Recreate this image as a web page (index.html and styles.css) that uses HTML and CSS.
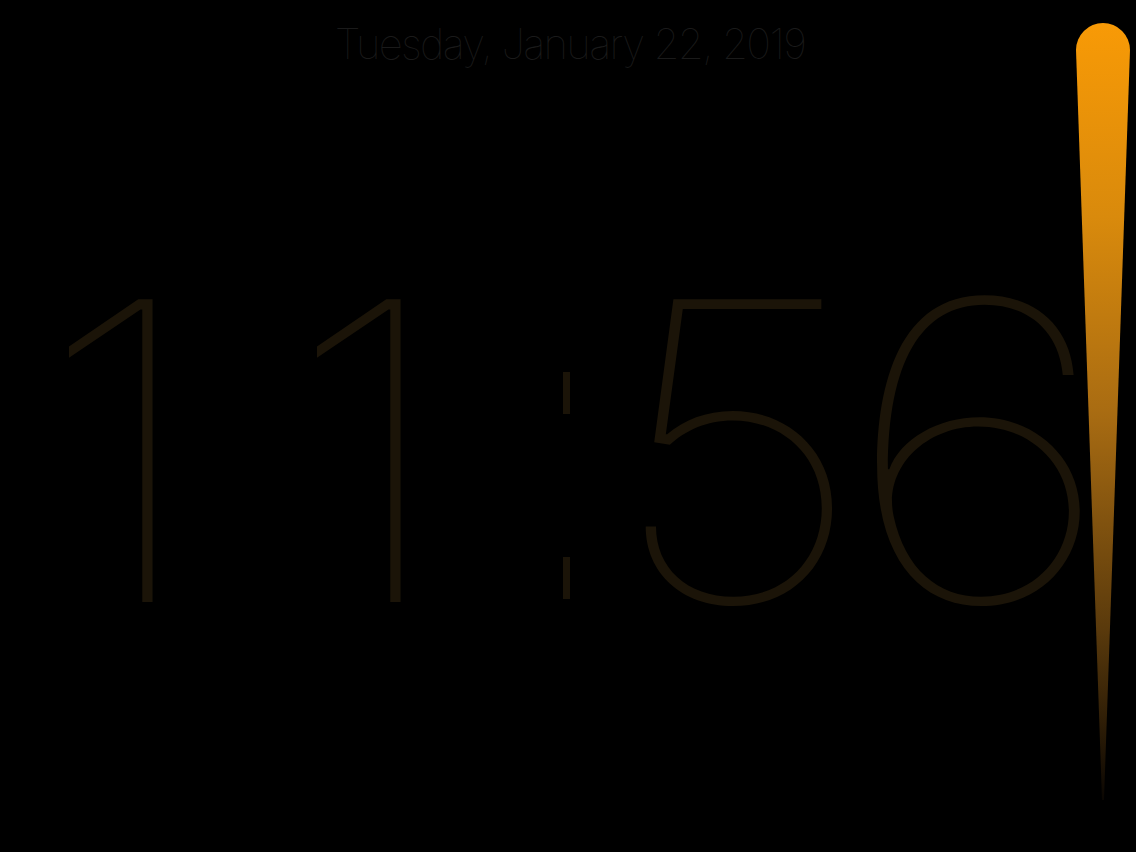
FILE: index.html
```html
<!DOCTYPE html>
<html lang="en">
<head>
<meta charset="utf-8">
<title>Clock</title>
<link rel="stylesheet" href="styles.css">
</head>
<body>
<main class="screen">
  <header class="date">Tuesday, January 22, 2019</header>
  <div class="clock">
    <span class="digit one"><span class="glyph">1</span></span><span class="digit one"><span class="glyph">1</span></span><span class="colon">:</span><span class="digit"><span class="glyph">5</span></span><span class="digit six"><span class="glyph">6</span></span>
  </div>
  <svg class="slider" width="60" height="810" viewBox="0 0 60 810" aria-hidden="true">
    <defs>
      <linearGradient id="bar" x1="0" y1="0" x2="0" y2="1">
        <stop offset="0" stop-color="#f89a06"/>
        <stop offset="0.25" stop-color="#d98a0c"/>
        <stop offset="0.5" stop-color="#a96c12"/>
        <stop offset="0.78" stop-color="#5a3a0c"/>
        <stop offset="1" stop-color="#0a0602"/>
      </linearGradient>
    </defs>
    <path d="M3 50 A27 27 0 0 1 57 50 L31 800 L29 800 Z" fill="url(#bar)"/>
  </svg>
</main>
</body>
</html>
```

FILE: styles.css
```css
html, body {
  margin: 0;
  padding: 0;
  background: #000;
}
.screen {
  position: relative;
  width: 1136px;
  height: 852px;
  overflow: hidden;
  background: #000;
  font-family: Inter, "Liberation Sans", sans-serif;
}
.date {
  text-align: center;
  font-size: 42px;
  font-weight: 100;
  color: #1a1a1a;
  line-height: 1;
  padding-top: 23px;
  padding-left: 4px;
  letter-spacing: -1.7px;
}
.clock {
  display: flex;
  padding-left: 20px;
  margin-top: 176px;
  font-size: 416px;
  font-weight: 100;
  line-height: 420px;
  color: #1b1408;
}
.digit {
  width: 248px;
  text-align: center;
}
.glyph {
  display: inline-block;
  transform: scaleX(1.1);
}
.one .glyph {
  transform: translateX(-24px) scaleX(1.1);
}
.six .glyph {
  transform: translateX(-6px) scaleX(1.16);
}
.colon {
  width: 96px;
  position: relative;
  color: transparent;
  text-align: center;
  font-size: 40px;
}
.colon::before,
.colon::after {
  content: "";
  position: absolute;
  left: 47px;
  width: 7px;
  height: 42px;
  background: #1b1408;
}
.colon::before {
  top: 131px;
}
.colon::after {
  top: 316px;
}
.slider {
  position: absolute;
  left: 1073px;
  top: 0;
}
```
